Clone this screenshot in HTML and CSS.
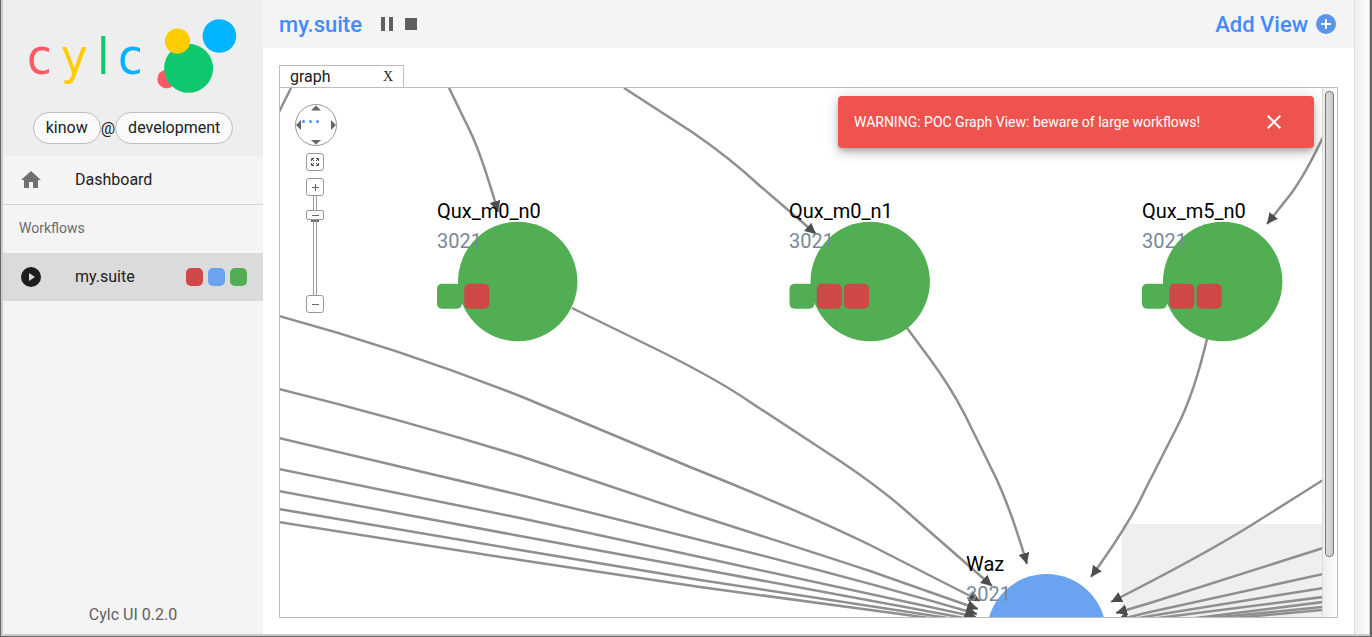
FILE: index.html
```html
<!DOCTYPE html>
<html lang="en">
<head>
<meta charset="utf-8">
<title>Cylc UI</title>
<link rel="stylesheet" href="styles.css">
</head>
<body>
<div class="frame">
  <aside class="sidebar">
    <div class="brand">
      <svg class="logo" width="212" height="80" viewBox="26 16 212 80" role="img" aria-label="cylc">
        <g class="logo-text">
          <text x="27" y="74" fill="#ff5966">c</text>
          <text x="61" y="74" fill="#ffcc00">y</text>
          <text x="97" y="74" fill="#0fc76e">l</text>
          <text x="118" y="74" fill="#00b4ff">c</text>
        </g>
        <circle cx="166.500" cy="79" r="9.200" fill="#ff5966"/>
        <circle cx="188.600" cy="68.300" r="24.500" fill="#0fc76e"/>
        <circle cx="177.500" cy="41.200" r="12.600" fill="#ffcc00"/>
        <circle cx="219.400" cy="36" r="16.800" fill="#00b4ff"/>
      </svg>
      <div class="identity"><span class="chip">kinow</span>@<span class="chip">development</span></div>
    </div>
    <nav class="nav">
      <a class="nav-item" href="#dashboard">
        <svg class="nav-icon" width="24" height="24" viewBox="0 0 24 24"><path fill="#707070" d="M10 20v-6h4v6h5v-8h3L12 3 2 12h3v8z"/></svg>
        <span>Dashboard</span>
      </a>
      <h2 class="nav-heading">Workflows</h2>
      <a class="nav-item nav-item-active" href="#my.suite">
        <svg class="nav-icon" width="24" height="24" viewBox="0 0 24 24"><circle cx="12" cy="12" r="10" fill="#1e1e1e"/><path fill="#dbdbdb" d="M10 8v8l6-4z"/></svg>
        <span>my.suite</span>
        <span class="states"><i class="state failed"></i><i class="state submitted"></i><i class="state succeeded"></i></span>
      </a>
    </nav>
    <footer class="version">Cylc UI 0.2.0</footer>
  </aside>

  <main class="main">
    <header class="toolbar">
      <h1 class="title">my.suite</h1>
      <button class="tool" aria-label="Pause"><svg width="12" height="14" viewBox="0 0 12 14"><path fill="#5f5f5f" d="M0 0h4v14H0zM8 0h4v14H8z"/></svg></button>
      <button class="tool" aria-label="Stop"><svg width="12" height="12" viewBox="0 0 12 12"><path fill="#5f5f5f" d="M0 0h12v12H0z"/></svg></button>
      <button class="add-view">Add View
        <svg width="20" height="20" viewBox="0 0 20 20"><circle cx="10" cy="10" r="10" fill="#5995eb"/><path fill="#fff" d="M9 5h2v4h4v2h-4v4H9v-4H5V9h4z"/></svg>
      </button>
    </header>

    <section class="workspace">
      <div class="tab"><span>graph</span><button class="tab-close" aria-label="Close graph">X</button></div>
      <div class="panel">
        <div class="canvas">
          <svg class="graph" width="100%" height="100%">
            <defs>
              <marker id="arrow" markerUnits="userSpaceOnUse" markerWidth="12" markerHeight="12" refX="11" refY="6" orient="auto"><path fill="#4d4d4d" d="M0 .5 11 6 0 11.500z"/></marker>
            </defs>
            <g transform="translate(-280 -88)">
              <rect x="1122" y="524" width="400" height="400" fill="#efefef"/>
              <g class="edges">
                <path d="M291 88 279 112"/>
                <path class="to" d="M449 88 470 131Q482 156 498 212"/>
                <path class="to" d="M624 88 692 132Q730 158 760 186L816 234"/>
                <path class="to" d="M1323 137Q1305 175 1290 195L1267 224"/>
                <path class="to" d="M572 308 660 351Q720 381 750 402L840 461Q880 488 905 510L992 586"/>
                <path class="to" d="M907 328 930 359Q950 386 965 415L997 480Q1012 513 1027 564"/>
                <path class="to" d="M1207 339Q1194 394 1177 427L1145 490Q1130 523 1091 577"/>
                <path class="to" d="M279 316Q400 349 520 396L690 467Q800 511 870 545L980 601"/>
                <path class="to" d="M279 389Q400 419 520 456L690 513Q800 548 870 571L978 609"/>
                <path class="to" d="M279 438 520 495 700 540Q850 577 977 614"/>
                <path class="to" d="M279 469 520 518 700 557 976 617"/>
                <path class="to" d="M279 491 520 536 700 569 975 620"/>
                <path class="to" d="M279 509 520 550 700 580 974 622"/>
                <path class="to" d="M279 522 520 560 700 587 974 624"/>
                <path class="to" d="M1323 480 1250 526Q1200 557 1111 602"/>
                <path class="to" d="M1323 548 1150 603 1116 613"/>
                <path class="to" d="M1323 574 1150 612 1117 620"/>
                <path class="to" d="M1323 588 1150 616 1117 622"/>
                <path d="M1323 597 1150 619"/>
                <path d="M1323 602 1180 620"/>
                <path d="M1323 607 1190 620"/>
                <path d="M1323 610 1200 621"/>
              </g>
              <g fill="#52ae52">
                <circle cx="517.700" cy="281.500" r="59.700"/>
                <circle cx="870.200" cy="281.500" r="59.700"/>
                <circle cx="1222.700" cy="281.500" r="59.700"/>
              </g>
              <circle cx="1046.500" cy="633.700" r="59.700" fill="#6aa3f0"/>
              <g class="jobs" fill="#52ae52">
                <rect x="437" y="283.700" width="25" height="25" rx="5"/>
                <rect x="789.500" y="283.700" width="25" height="25" rx="5"/>
                <rect x="1142" y="283.700" width="25" height="25" rx="5"/>
              </g>
              <g class="jobs" fill="#cf4848">
                <rect x="464.300" y="283.700" width="25" height="25" rx="5"/>
                <rect x="816.800" y="283.700" width="25" height="25" rx="5"/>
                <rect x="844" y="283.700" width="25" height="25" rx="5"/>
                <rect x="1169.300" y="283.700" width="25" height="25" rx="5"/>
                <rect x="1196.600" y="283.700" width="25" height="25" rx="5"/>
              </g>
              <g class="names">
                <text x="437" y="218">Qux_m0_n0</text>
                <text x="789" y="218">Qux_m0_n1</text>
                <text x="1142" y="218">Qux_m5_n0</text>
                <text x="966" y="571">Waz</text>
              </g>
              <g class="cycles">
                <text x="437" y="248">3021</text>
                <text x="789" y="248">3021</text>
                <text x="1142" y="248">3021</text>
                <text x="966" y="601">3021</text>
              </g>
            </g>
          </svg>

          <div class="panzoom">
            <svg class="panner" width="42" height="42" viewBox="0 0 42 42">
              <circle cx="21" cy="21" r="20.500" fill="#fff" stroke="#999"/>
              <path fill="#666" d="M16 6.500 21 1.500 26 6.500zM16 36 21 40.500 26 36zM6 16v10L1 21zM36 16v10l5-5z"/>
              <g fill="#4d90f5"><circle cx="8.500" cy="17.500" r="1.500"/><circle cx="15.500" cy="17.500" r="1.500"/><circle cx="22.500" cy="17.500" r="1.500"/></g>
            </svg>
            <div class="pz-controls">
              <button class="pz-button pz-fit" aria-label="Fit"><svg width="8" height="8" viewBox="0 0 8 8"><path fill="none" stroke="#555" d="M.5 3V.5H3M5 .5h2.500V3M7.500 5v2.500H5M3 7.500H.5V5M1 1l2 2M7 1 5 3M7 7 5 5M1 7l2-2"/></svg></button>
              <button class="pz-button" aria-label="Zoom in"><svg width="8" height="8" viewBox="0 0 8 8"><path stroke="#666" d="M1 4.500h7M4.500 1v7"/></svg></button>
              <input class="pz-slider" type="range" min="0" max="100" value="84" aria-label="Zoom">
              <button class="pz-button" aria-label="Zoom out"><svg width="8" height="8" viewBox="0 0 8 8"><path stroke="#666" d="M1 4.500h7"/></svg></button>
            </div>
          </div>
        </div>
        <div class="scroll-track"><div class="scroll-thumb"></div></div>
      </div>
    </section>

    <div class="toast" role="alert">
      <span>WARNING: POC Graph View: beware of large workflows!</span>
      <button class="toast-close" aria-label="Dismiss"><svg width="24" height="24" viewBox="0 0 24 24"><path fill="#fff" d="M19 6.410 17.590 5 12 10.590 6.410 5 5 6.410 10.590 12 5 17.590 6.410 19 12 13.410 17.590 19 19 17.590 13.410 12z"/></svg></button>
    </div>
  </main>
  <div class="window-scroll"></div>
</div>
</body>
</html>
```

FILE: styles.css
```css
* { box-sizing: border-box; }

body {
  margin: 0;
  font-family: Roboto, sans-serif;
  font-size: 16px;
  color: #212121;
  background: #666;
}

button {
  margin: 0;
  padding: 0;
  border: 0;
  background: none;
  font: inherit;
  color: inherit;
  cursor: pointer;
}

svg { display: block; }

.frame {
  display: flex;
  height: 100vh;
  overflow: hidden;
  border: solid #666;
  border-width: 0 2px 1px 1px;
  background: #fff;
  box-shadow: inset 0 0 0 2px #ccc;
  padding: 0 1px 2px 2px;
}

/* Sidebar */
.sidebar {
  display: flex;
  flex-direction: column;
  flex: 0 0 260px;
  background: #f4f4f4;
}

.brand {
  padding: 16px 0 12px;
  background: #eee;
}

.logo { margin: 0 auto 0 23px; }

.logo-text {
  font-family: "DejaVu Sans Condensed", "DejaVu Sans", sans-serif;
  font-size: 50px;
}

.identity {
  display: flex;
  align-items: center;
  justify-content: center;
  margin-top: 16px;
}

.chip {
  padding: 0 12px;
  border: 1px solid #bdbdbd;
  border-radius: 16px;
  background: #fafafa;
  line-height: 30px;
}

.nav-item {
  display: flex;
  align-items: center;
  height: 48px;
  padding: 0 16px;
  line-height: 24px;
  color: inherit;
  text-decoration: none;
}

.nav-icon { margin-right: 32px; }

.nav-heading {
  margin: 0;
  padding: 0 16px 2px;
  border-top: 1px solid #d6d6d6;
  font-size: 14px;
  font-weight: 400;
  line-height: 46px;
  color: #6b6b6b;
}

.nav-item-active { background: #dbdbdb; }

.states {
  display: flex;
  gap: 5px;
  margin-left: auto;
}

.state {
  width: 17px;
  height: 18px;
  border-radius: 5px;
}

.failed { background: #cf4848; }
.submitted { background: #6aa3f0; }
.succeeded { background: #52ae52; }

.version {
  margin-top: auto;
  padding-bottom: 7px;
  line-height: 24px;
  text-align: center;
  color: #616161;
}

/* Main area */
.main {
  position: relative;
  display: flex;
  flex: 1;
  flex-direction: column;
  min-width: 0;
  background: #fff;
}

.toolbar {
  display: flex;
  align-items: center;
  flex: 0 0 48px;
  padding: 0 18px 0 16px;
  background: #f4f4f4;
}

.title {
  margin: 0 19px 0 0;
  font-size: 22px;
  font-weight: 500;
  color: #448aff;
}

.tool { margin-right: 12px; }

.add-view {
  display: flex;
  align-items: center;
  gap: 8px;
  margin-left: auto;
  font-size: 22px;
  font-weight: 500;
  color: #448aff;
}

.workspace {
  display: flex;
  flex: 1;
  flex-direction: column;
  min-height: 0;
  padding: 17px 16px 16px;
}

.tab {
  display: flex;
  align-items: center;
  justify-content: space-between;
  width: 125px;
  height: 22px;
  padding: 0 10px;
  border: 1px solid #bdbdbd;
  border-bottom: 0;
}

.tab-close {
  font-family: "Liberation Serif", serif;
  font-size: 14px;
}

.panel {
  display: flex;
  flex: 1;
  min-height: 0;
  border: 1px solid #bdbdbd;
}

.canvas {
  position: relative;
  flex: 1;
  min-width: 0;
  overflow: hidden;
}

.graph {
  position: absolute;
  inset: 0;
}

.edges path {
  fill: none;
  stroke: #8f8f8f;
  stroke-width: 2.500;
}

.edges .to { marker-end: url(#arrow); }

.names,
.cycles { font-size: 20px; }

.names { fill: #000; }
.cycles { fill: #778899; }

.panzoom {
  position: absolute;
  top: 16px;
  left: 15px;
}

.pz-controls {
  display: flex;
  flex-direction: column;
  width: 18px;
  margin-left: 11px;
}

.pz-button {
  display: flex;
  align-items: center;
  justify-content: center;
  width: 18px;
  height: 18px;
  border: 1px solid #999;
  border-radius: 3px;
  background: #fff;
}

.pz-fit { margin: 7px 0; }

.pz-slider {
  appearance: none;
  writing-mode: vertical-lr;
  direction: rtl;
  width: 18px;
  height: 99px;
  margin: 0;
  background: linear-gradient(#666, #666) center 24px / 8px 2px no-repeat;
}

.pz-slider::-webkit-slider-runnable-track {
  width: 4px;
  height: 99px;
  border: solid #999;
  border-width: 0 1px;
}

.pz-slider::-webkit-slider-thumb {
  appearance: none;
  width: 18px;
  height: 10px;
  margin-left: -8px;
  border: 1px solid #999;
  border-radius: 2px;
  background: linear-gradient(#666, #666) center / 7px 1px no-repeat #fff;
}

.scroll-track {
  flex: 0 0 15px;
  padding: 3px 2px 0;
  border-left: 1px solid #ddd;
  background: linear-gradient(90deg, #eee, #fff);
}

.scroll-thumb {
  width: 9px;
  height: 466px;
  max-height: 89%;
  border: 1px solid #777;
  border-radius: 4px;
  background: linear-gradient(90deg, #dcdcdc, #c9c9c9);
}

.window-scroll {
  flex: 0 0 15px;
  border-left: 1px solid #ddd;
  background: linear-gradient(90deg, #eee, #fff);
}

/* Notification */
.toast {
  position: absolute;
  top: 96px;
  right: 40px;
  display: flex;
  align-items: center;
  justify-content: space-between;
  width: 476px;
  height: 52px;
  padding: 0 28px 0 16px;
  border-radius: 4px;
  background: #ef5350;
  box-shadow: 0 3px 5px -1px rgba(0, 0, 0, .2), 0 6px 10px rgba(0, 0, 0, .14), 0 1px 18px rgba(0, 0, 0, .12);
  font-size: 14px;
  color: #fff;
}
```
